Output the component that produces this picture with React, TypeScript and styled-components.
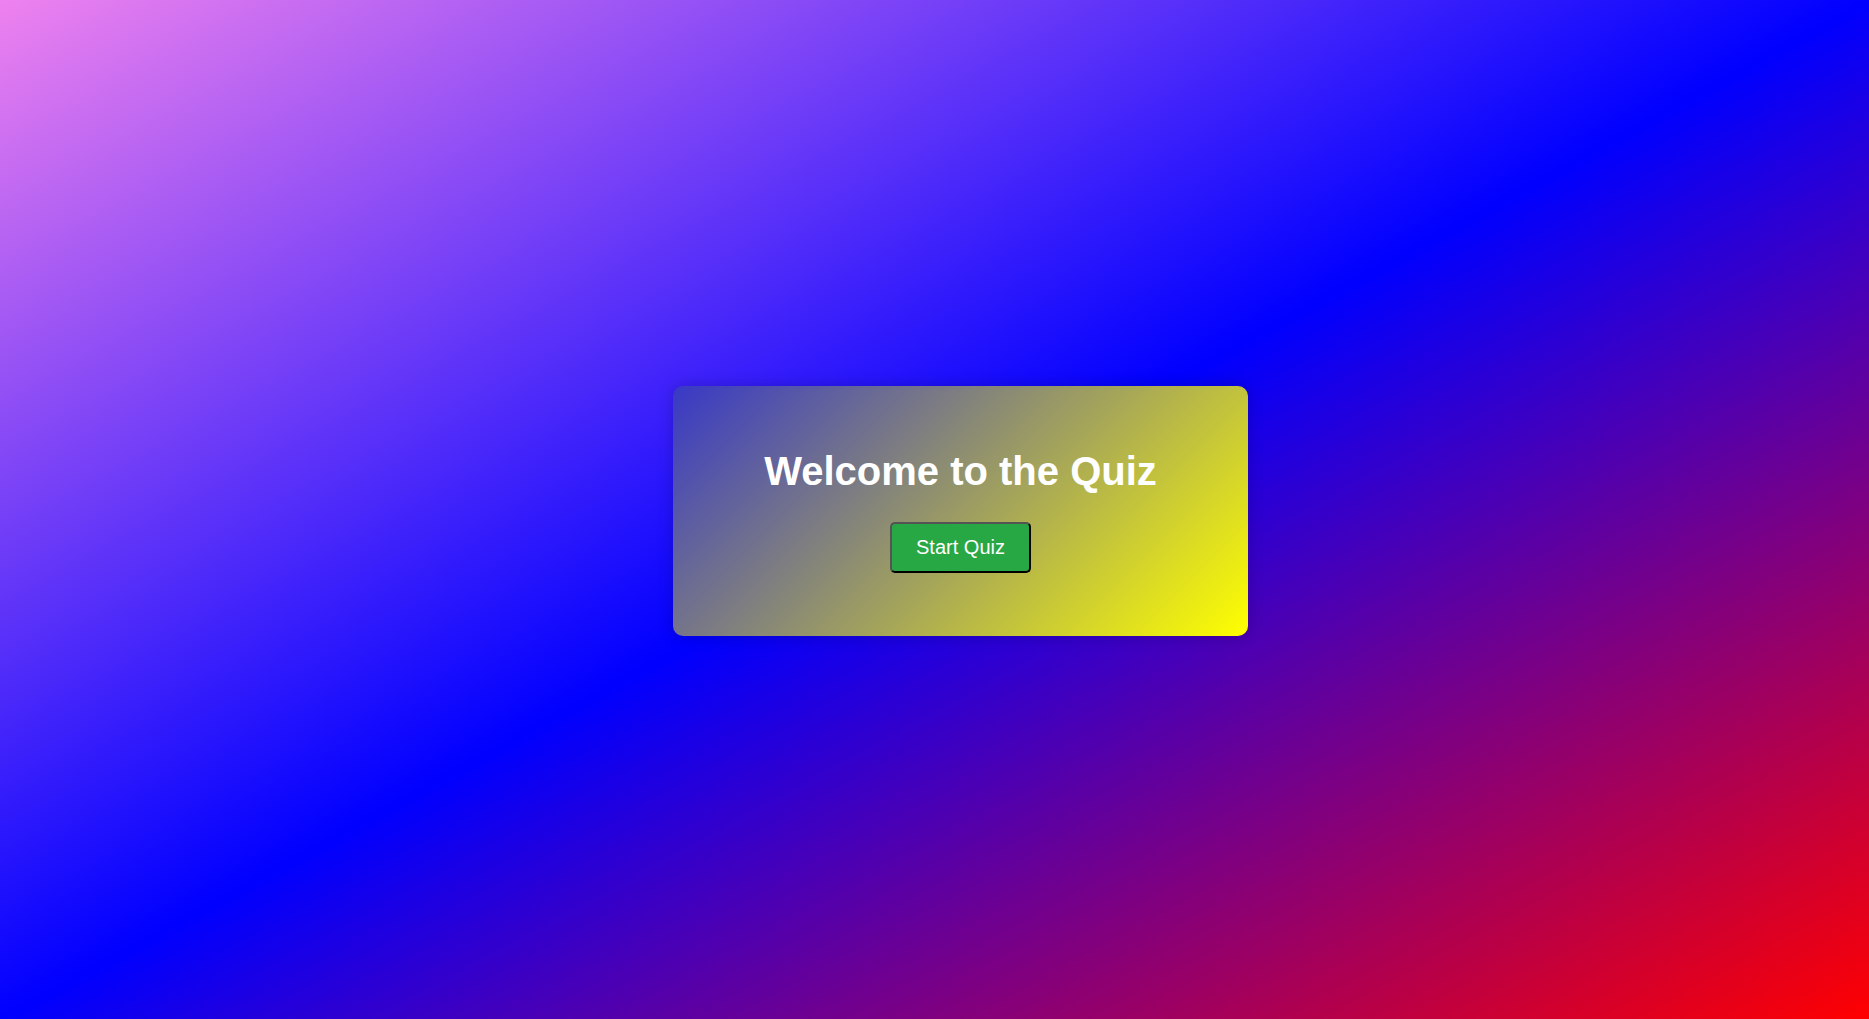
import React from "react";
import styled, { createGlobalStyle } from "styled-components";

const GlobalStyle = createGlobalStyle`
  html, body {
    margin: 0;
    padding: 0;
  }
  body {
    font-family: "Liberation Sans", Arial, sans-serif;
  }
`;

const Page = styled.div`
  min-height: 100vh;
  box-sizing: border-box;
  display: flex;
  align-items: center;
  justify-content: center;
  padding: 3px 0 0 52px;
  background: linear-gradient(to bottom right, violet, blue, red);
`;

const Card = styled.div`
  width: 575px;
  height: 250px;
  box-sizing: border-box;
  padding: 62px 40px 0;
  border-radius: 10px;
  display: flex;
  flex-direction: column;
  align-items: center;
  background: linear-gradient(135deg, blue -28%, yellow 100%);
  box-shadow: 0 0 16px rgba(0, 0, 0, 0.2);
`;

const Title = styled.h1`
  margin: 0 0 28px;
  font-size: 40px;
  font-weight: bold;
  line-height: 46px;
  color: #ffffff;
`;

const StartButton = styled.button`
  font-family: "Liberation Sans", Arial, sans-serif;
  font-size: 20px;
  line-height: 23px;
  color: #ffffff;
  background: #28a745;
  padding: 12px 24px;
  border: 2px outset #000;
  border-radius: 5px;
  cursor: pointer;
`;

export default function App() {
  return (
    <>
      <GlobalStyle />
      <Page>
        <Card>
          <Title>Welcome to the Quiz</Title>
          <StartButton>Start Quiz</StartButton>
        </Card>
      </Page>
    </>
  );
}
